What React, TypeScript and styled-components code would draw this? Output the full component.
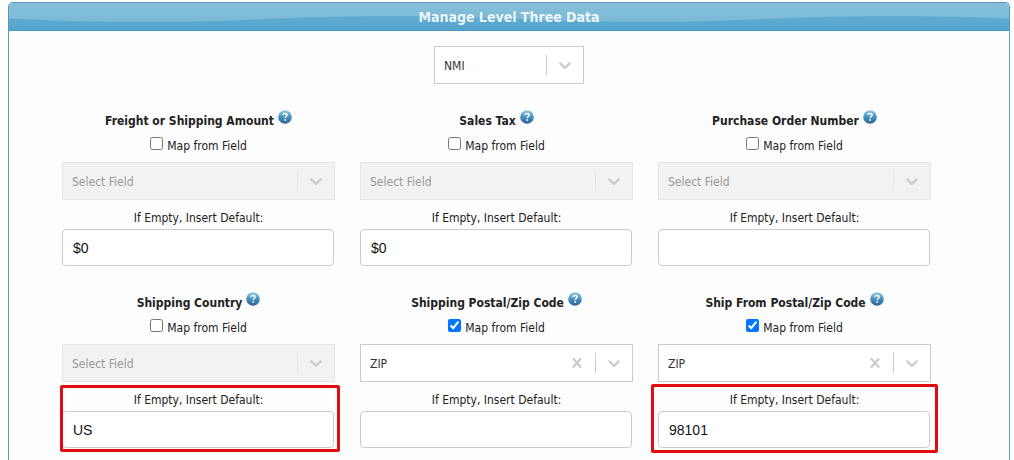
import React from 'react';
import styled, { createGlobalStyle, css } from 'styled-components';

const Global = createGlobalStyle`
  *, *::before, *::after { box-sizing: border-box; }
  body {
    margin: 0;
    background: #fff;
    color: #222;
    font: 12px/16px "DejaVu Sans Condensed", "DejaVu Sans", sans-serif;
  }
`;

const Panel = styled.section`
  margin: 2px 4px 0 8px;
  border: 1px solid #5a98bf;
  border-bottom: 0;
  border-radius: 5px 5px 0 0;
  background: #fdfdfd;
  overflow: hidden;
`;

const Header = styled.header`
  display: grid;
  height: 28px;
  border-bottom: 1px solid #4e9abf;
  background: linear-gradient(#87bfda, #74b7d5);
  > * { grid-area: 1 / 1; }
`;

const Wave = styled.svg`
  width: 100%;
  height: 27px;
`;

const Title = styled.h1`
  margin: 0;
  align-self: center;
  text-align: center;
  color: #eaf5f7;
  font: bold 14px/20px "DejaVu Sans Condensed", "DejaVu Sans", sans-serif;
`;

const ProcessorBar = styled.div`
  display: flex;
  justify-content: center;
  padding: 15px 0 24px;
`;

const Fields = styled.div`
  display: grid;
  grid-template-columns: repeat(3, minmax(0, 1fr));
  gap: 24px 25px;
  padding: 0 78px 12px 53px;
`;

const Field = styled.fieldset`
  display: flex;
  flex-direction: column;
  min-width: 0;
  margin: 0;
  padding: 0;
  border: 0;
`;

const FieldName = styled.div`
  display: flex;
  justify-content: center;
  gap: 4px;
  height: 24px;
`;

const Name = styled.span`
  padding-top: 5px;
  font-weight: bold;
  line-height: 16px;
`;

const HelpButton = styled.button`
  width: 14px;
  height: 14px;
  margin-top: 2px;
  padding: 0;
  border: 0;
  background: none;
  svg { display: block; }
`;

const MapLabel = styled.label`
  display: flex;
  justify-content: center;
  gap: 4px;
  height: 30px;
  padding-top: 5px;
  line-height: 18px;
`;

const Tick = styled.input`
  width: 13px;
  height: 13px;
  margin: 0;
`;

const SelectBox = styled.div<{ $width?: string }>`
  display: grid;
  width: ${p => p.$width ?? '100%'};
  height: 38px;
  > * { grid-area: 1 / 1; }
`;

const NativeSelect = styled.select`
  appearance: none;
  width: 100%;
  padding: 2px 40px 0 9px;
  border: 1px solid #ccc;
  border-radius: 0;
  background: #fff;
  color: #333;
  font: inherit;
  opacity: 1;
  &:disabled {
    border-color: #e6e6e6;
    background: #f2f2f2;
    color: #999;
  }
`;

const Indicators = styled.div<{ $disabled?: boolean }>`
  display: flex;
  align-items: center;
  justify-self: end;
  color: #ccc;
  pointer-events: none;
  svg { display: block; fill: currentColor; stroke: currentColor; stroke-width: 0; }
  &::before {
    content: "";
    order: 1;
    width: 1px;
    height: 20px;
    background: ${p => (p.$disabled ? '#e6e6e6' : '#ccc')};
  }
`;

const ClearButton = styled.button`
  padding: 8px;
  border: 0;
  background: none;
  color: inherit;
  pointer-events: auto;
`;

const Arrow = styled.span`
  order: 2;
  padding: 8px 9px 8px 8px;
`;

const DefaultValue = styled.div`
  position: relative;
  padding-top: 10px;
`;

const DefaultLabel = styled.label`
  display: block;
  margin-bottom: 3px;
  text-align: center;
`;

const TextBox = styled.input`
  display: block;
  width: calc(100% - 1px);
  height: 37px;
  padding: 0 10px;
  border: 1px solid #ccc;
  border-radius: 4px;
  background: #fff;
  color: #111;
  font: 14px/20px "Liberation Sans", Arial, sans-serif;
`;

const Highlight = styled.div<{ $wide?: boolean }>`
  position: absolute;
  border: 3px solid #e30b12;
  border-radius: 2px;
  pointer-events: none;
  ${p =>
    p.$wide
      ? css`inset: 2px -7px -5px;`
      : css`inset: 3px -5px -4px -2px;`}
`;

const Chevron = () => (
  <svg width="20" height="20" viewBox="0 0 20 20" aria-hidden="true">
    <path d="M4.516 7.548c0.436-0.446 1.043-0.481 1.576 0l3.908 3.747 3.908-3.747c0.533-0.481 1.141-0.446 1.574 0 0.436 0.445 0.408 1.197 0 1.615-0.406 0.418-4.695 4.502-4.695 4.502-0.217 0.223-0.502 0.335-0.787 0.335s-0.57-0.112-0.789-0.335c0 0-4.287-4.084-4.695-4.502s-0.436-1.17 0-1.615z" />
  </svg>
);

const Cross = () => (
  <svg width="20" height="20" viewBox="0 0 20 20" aria-hidden="true">
    <path d="M14.348 14.849c-0.469 0.469-1.229 0.469-1.697 0l-2.651-3.030-2.651 3.029c-0.469 0.469-1.229 0.469-1.697 0-0.469-0.469-0.469-1.229 0-1.697l2.758-3.15-2.759-3.152c-0.469-0.469-0.469-1.228 0-1.697s1.228-0.469 1.697 0l2.652 3.031 2.651-3.031c0.469-0.469 1.228-0.469 1.697 0s0.469 1.229 0 1.697l-2.758 3.152 2.758 3.15c0.469 0.469 0.469 1.229 0 1.698z" />
  </svg>
);

const HelpIcon = () => (
  <svg width="14" height="14" viewBox="0 0 14 14" aria-hidden="true">
    <defs>
      <linearGradient id="help-ball" x1="0" y1="0" x2="0" y2="1">
        <stop offset="0" stopColor="#8fcde8" />
        <stop offset="0.5" stopColor="#4690bf" />
        <stop offset="1" stopColor="#2c6496" />
      </linearGradient>
    </defs>
    <circle cx="7" cy="7" r="6.8" fill="url(#help-ball)" />
    <path d="M5 5.2C5.1 3.9 6 3.4 7 3.4c1.200 0 2.100.7 2.100 1.700 0 1.300-1.900 1.500-1.900 3" fill="none" stroke="#fff" strokeWidth="1.500" />
    <rect x="6.400" y="9.200" width="1.600" height="1.600" fill="#fff" />
  </svg>
);

type SelectProps = {
  label: string;
  value: string;
  options: string[];
  width?: string;
  disabled?: boolean;
  clearable?: boolean;
};

const Select = ({ label, value, options, width, disabled, clearable }: SelectProps) => (
  <SelectBox $width={width}>
    <NativeSelect aria-label={label} defaultValue={value} disabled={disabled}>
      {options.map(o => <option key={o}>{o}</option>)}
    </NativeSelect>
    <Indicators $disabled={disabled}>
      {clearable && <ClearButton type="button" aria-label="Clear"><Cross /></ClearButton>}
      <Arrow><Chevron /></Arrow>
    </Indicators>
  </SelectBox>
);

type FieldData = {
  name: string;
  mapped?: string;
  fallback: string;
  highlight?: 'narrow' | 'wide';
};

const fields: FieldData[] = [
  { name: 'Freight or Shipping Amount', fallback: '$0' },
  { name: 'Sales Tax', fallback: '$0' },
  { name: 'Purchase Order Number', fallback: '' },
  { name: 'Shipping Country', fallback: 'US', highlight: 'narrow' },
  { name: 'Shipping Postal/Zip Code', mapped: 'ZIP', fallback: '' },
  { name: 'Ship From Postal/Zip Code', mapped: 'ZIP', fallback: '98101', highlight: 'wide' },
];

const MappedField = ({ name, mapped, fallback, highlight }: FieldData) => {
  const id = React.useId();
  return (
    <Field aria-label={name}>
      <FieldName>
        <Name>{name}</Name>
        <HelpButton type="button" aria-label={`Help: ${name}`}><HelpIcon /></HelpButton>
      </FieldName>
      <MapLabel>
        <Tick type="checkbox" defaultChecked={!!mapped} />
        <span>Map from Field</span>
      </MapLabel>
      <Select
        label={`${name} field`}
        value={mapped ?? 'Select Field'}
        options={['Select Field', 'ZIP']}
        disabled={!mapped}
        clearable={!!mapped}
      />
      <DefaultValue>
        <DefaultLabel htmlFor={id}>If Empty, Insert Default:</DefaultLabel>
        <TextBox id={id} type="text" defaultValue={fallback} />
        {highlight && <Highlight $wide={highlight === 'wide'} />}
      </DefaultValue>
    </Field>
  );
};

export default function App() {
  return (
    <>
      <Global />
      <Panel>
        <Header>
          <Wave viewBox="0 0 1000 27" preserveAspectRatio="none" aria-hidden="true">
            <defs>
              <linearGradient id="wave" x1="0" y1="0" x2="0" y2="1">
                <stop offset="0" stopColor="#62abd1" />
                <stop offset="1" stopColor="#54a5cb" />
              </linearGradient>
            </defs>
            <path d="M0 15.500C45 18 90 19 140 19C230 19 280 13 380 13C430 13 460 14 500 15.500C545 18 590 19 640 19C730 19 780 13 880 13C930 13 960 14 1000 15.500V27H0Z" fill="url(#wave)" />
          </Wave>
          <Title>Manage Level Three Data</Title>
        </Header>
        <ProcessorBar>
          <Select label="Processor" value="NMI" options={['NMI']} width="150px" />
        </ProcessorBar>
        <Fields>
          {fields.map(f => <MappedField key={f.name} {...f} />)}
        </Fields>
      </Panel>
    </>
  );
}
